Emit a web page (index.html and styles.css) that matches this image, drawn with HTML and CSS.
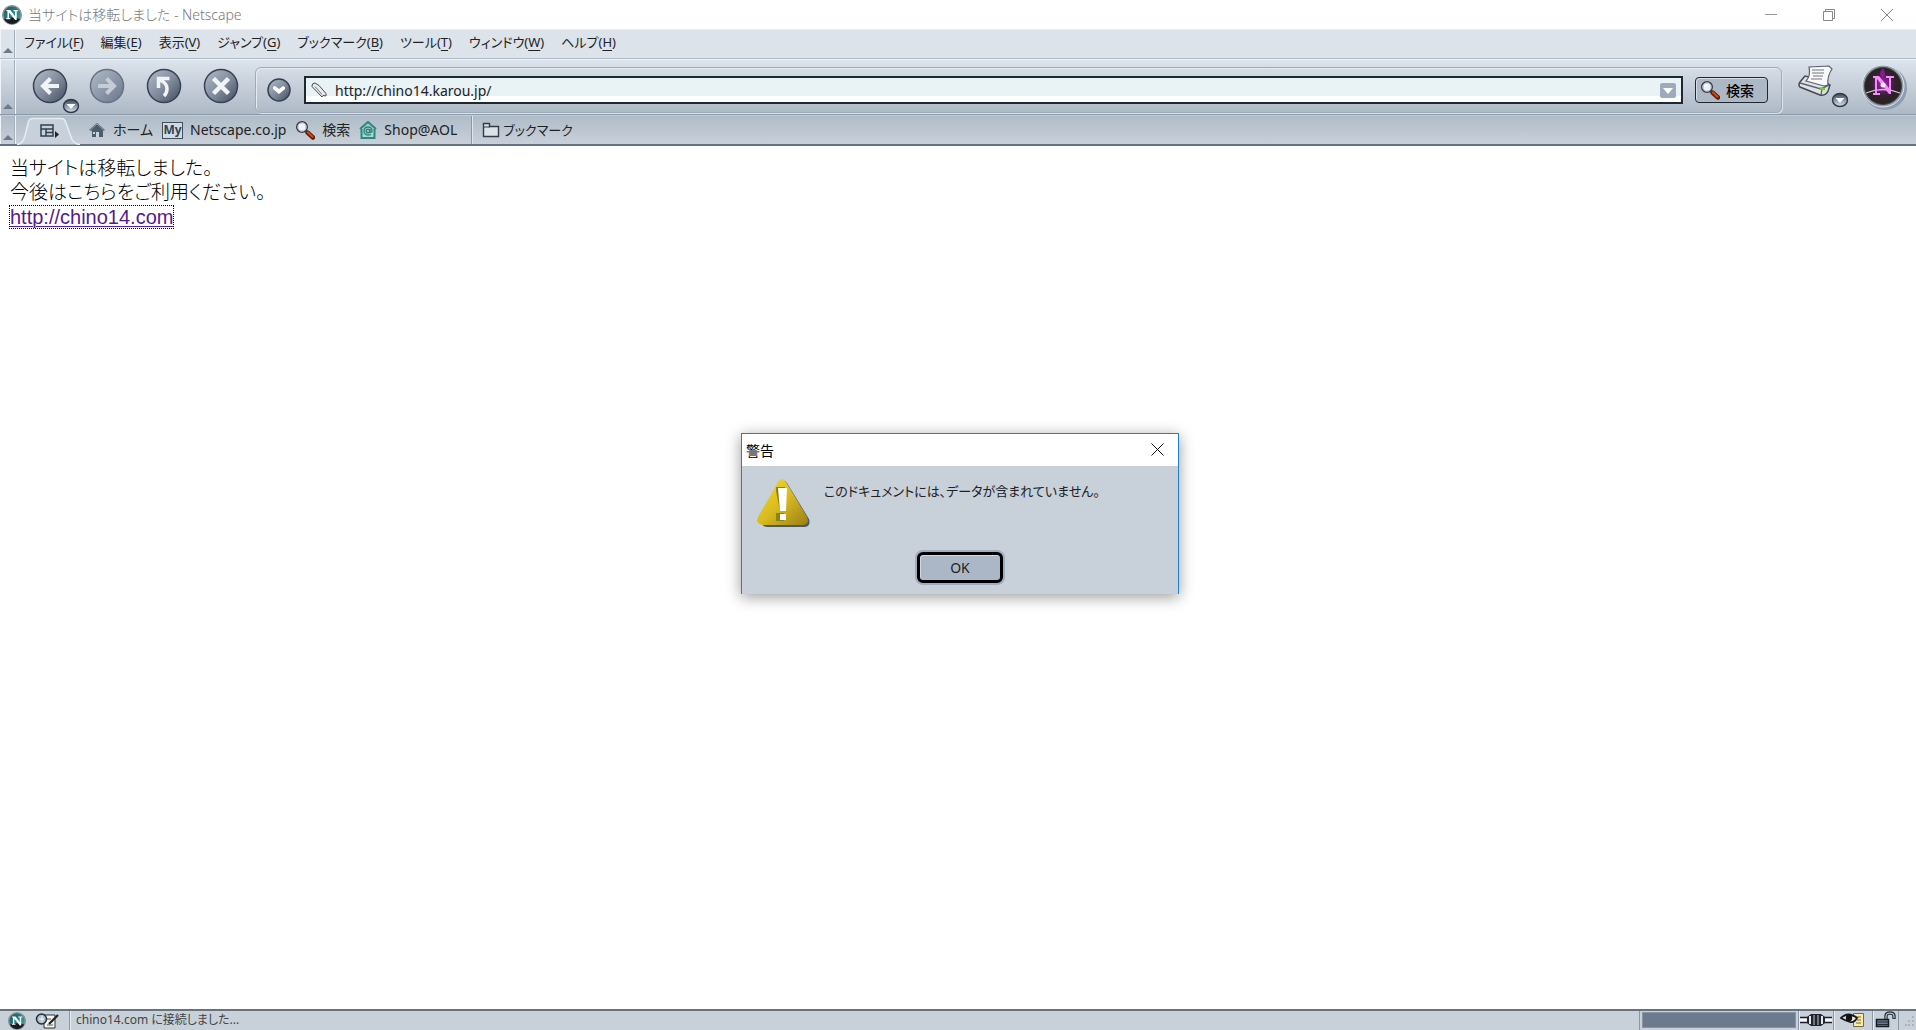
FILE: index.html
```html
<!DOCTYPE html>
<html lang="ja">
<head>
    <meta charset="UTF-8">
    <meta name="viewport" content="width=device-width, initial-scale=1.0">
    <title>当サイトは移転しました - Netscape</title>
    <link rel="stylesheet" href="styles.css">
</head>
<body>

    <!-- Shared gradients and small icons -->
    <svg class="defs" width="0" height="0" aria-hidden="true">
        <defs>
            <linearGradient id="ball" x1="0" y1="0" x2="1" y2="1">
                <stop offset="0" stop-color="#b4becb"/>
                <stop offset="0.55" stop-color="#7d899a"/>
                <stop offset="1" stop-color="#3f4b5d"/>
            </linearGradient>
            <linearGradient id="ballOff" x1="0" y1="0" x2="1" y2="1">
                <stop offset="0" stop-color="#b3bdca"/>
                <stop offset="1" stop-color="#68758a"/>
            </linearGradient>
            <linearGradient id="drop" x1="0" y1="0" x2="0" y2="1">
                <stop offset="0" stop-color="#3c4859"/>
                <stop offset="0.5" stop-color="#8794a6"/>
                <stop offset="1" stop-color="#dfe5ec"/>
            </linearGradient>
            <linearGradient id="teal" x1="0" y1="0" x2="1" y2="1">
                <stop offset="0" stop-color="#0d5558"/>
                <stop offset="1" stop-color="#3db0b0"/>
            </linearGradient>
            <linearGradient id="yellow" x1="0" y1="0" x2="1" y2="1">
                <stop offset="0" stop-color="#f5dc2c"/>
                <stop offset="0.5" stop-color="#d9bb20"/>
                <stop offset="1" stop-color="#9a7f14"/>
            </linearGradient>
            <radialGradient id="glow">
                <stop offset="0" stop-color="#d52be0"/>
                <stop offset="0.4" stop-color="#9a1aa8"/>
                <stop offset="1" stop-color="#2b2028" stop-opacity="0"/>
            </radialGradient>
            <symbol id="netscape" viewBox="0 0 20 20">
                <circle cx="10" cy="10" r="9.200" fill="url(#teal)" stroke="#8d8f90" stroke-width="1.600"/>
                <path d="M2 14Q10 11 18 14Q15 19 10 19T2 14z" fill="#151d22"/>
                <path d="M4.500 5h3.800l4.700 6V6.200h-1.500V5H16v1.200h-1.300V15h-1.500L7 7.500V13h1.300v1.200h-4V13h1.200V6.200h-1z" fill="#fff"/>
            </symbol>
            <symbol id="magnifier" viewBox="0 0 20 20">
                <path d="M10.500 10.500l2 2" stroke="#333" stroke-width="2"/>
                <path d="M12.500 12.500l5.500 5" stroke="#5a1c08" stroke-width="4.400" stroke-linecap="round"/>
                <path d="M13 12.500l4.500 4.200" stroke="#cf4a12" stroke-width="2.200" stroke-linecap="round"/>
                <circle cx="7" cy="7" r="5.300" fill="#eef1f8" stroke="#3a3d44" stroke-width="1.500"/>
                <circle cx="7" cy="7" r="4.100" fill="none" stroke="#a8aec0"/>
                <path d="M5 7a2.500 2.500 0 0 1 2.500-2.500" stroke="#fff" stroke-width="1.500" fill="none"/>
            </symbol>
            <symbol id="smallDrop" viewBox="0 0 18 16">
                <ellipse cx="9" cy="8" rx="7.500" ry="6.500" fill="url(#drop)" stroke="#2f3947" stroke-width="1.400"/>
                <path d="M4.500 6h9L9 11z" fill="#fff"/>
            </symbol>
        </defs>
    </svg>

    <!-- Window title -->
    <header class="title-bar">
        <svg class="title-icon" width="20" height="20"><use href="#netscape"/></svg>
        <h1>当サイトは移転しました - Netscape</h1>
        <div class="window-buttons">
            <button type="button" aria-label="最小化"><svg width="12" height="12"><path d="M0 5.500h12" stroke="#999"/></svg></button>
            <button type="button" aria-label="元に戻す"><svg width="12" height="12" fill="none" stroke="#888"><path d="M.5 2.500h9v9h-9zM2.500 2.500v-2h9v9h-2"/></svg></button>
            <button type="button" aria-label="閉じる"><svg width="12" height="12" stroke="#888"><path d="M0 0l12 12M12 0L0 12"/></svg></button>
        </div>
    </header>

    <!-- Menu -->
    <nav class="bar menu-bar">
        <div class="grip"></div>
        <div class="menu-items">
            <button type="button">ファイル(<u>F</u>)</button>
            <button type="button">編集(<u>E</u>)</button>
            <button type="button">表示(<u>V</u>)</button>
            <button type="button">ジャンプ(<u>G</u>)</button>
            <button type="button">ブックマーク(<u>B</u>)</button>
            <button type="button">ツール(<u>T</u>)</button>
            <button type="button">ウィンドウ(<u>W</u>)</button>
            <button type="button">ヘルプ(<u>H</u>)</button>
        </div>
    </nav>

    <!-- Navigation -->
    <div class="bar nav-bar">
        <div class="grip"></div>
        <div class="nav-buttons">
            <div class="nav-item">
                <button type="button" aria-label="戻る">
                    <svg width="36" height="36"><circle cx="18" cy="18" r="16.500" fill="url(#ball)" stroke="#37414f" stroke-width="1.500"/><path d="M27 18H12M18.500 10.500L11 18l7.500 7.500" fill="none" stroke="#f1f4f7" stroke-width="4"/></svg>
                </button>
                <button type="button" class="nav-drop" aria-label="戻る履歴"><svg width="18" height="16"><use href="#smallDrop"/></svg></button>
            </div>
            <button type="button" aria-label="進む">
                <svg width="36" height="36"><circle cx="18" cy="18" r="16.500" fill="url(#ballOff)" stroke="#66727f" stroke-width="1.500"/><path d="M9 18h15M17.500 10.500L25 18l-7.500 7.500" fill="none" stroke="#c5ccd6" stroke-width="4"/></svg>
            </button>
            <button type="button" aria-label="再読み込み">
                <svg width="36" height="36"><circle cx="18" cy="18" r="16.500" fill="url(#ball)" stroke="#37414f" stroke-width="1.500"/><path d="M12.500 20v-9.500h11M14 12q7 3 7 9 0 4-3 7" fill="none" stroke="#f1f4f7" stroke-width="3.500"/></svg>
            </button>
            <button type="button" aria-label="中止">
                <svg width="36" height="36"><circle cx="18" cy="18" r="16.500" fill="url(#ball)" stroke="#37414f" stroke-width="1.500"/><path d="M10.500 10.500l15 15M25.500 10.500l-15 15" stroke="#f1f4f7" stroke-width="4.500"/></svg>
            </button>
        </div>
        <form class="location">
            <button type="button" class="history" aria-label="履歴">
                <svg width="24" height="24"><circle cx="12" cy="12" r="11" fill="url(#ball)" stroke="#37414f" stroke-width="1.500"/><path d="M6 9l2-1 4 3 4-3 2 1v2l-6 5-6-5z" fill="#fff"/></svg>
            </button>
            <div class="url-box">
                <svg width="16" height="16"><path d="M1 4.500Q.5 1 4 1L8 3.500l7 8v2.500l-3-.5L11 15z" fill="#e9ecee" stroke="#454a50"/><path d="M4 4.500l7 8" stroke="#777"/></svg>
                <input type="text" aria-label="アドレス" value="http://chino14.karou.jp/">
                <button type="button" aria-label="アドレス一覧"><svg width="16" height="15"><rect width="16" height="15" rx="2" fill="#9eabbd"/><path d="M3 5h10l-5 6z" fill="#fff"/></svg></button>
            </div>
            <button type="submit" class="search-btn"><svg width="20" height="20"><use href="#magnifier"/></svg>検索</button>
        </form>
        <div class="nav-tools">
            <div class="nav-item">
                <button type="button" aria-label="印刷">
                    <svg width="36" height="34">
                        <path d="M2 17Q0 20 2 22L22 30q6 1 8-4l2-6-8-5-17-4z" fill="#dfe3e7" stroke="#434a52" stroke-width="1.500"/>
                        <path d="M2 18l21 6 8-4M24 24l-1 6" fill="none" stroke="#5d656f" stroke-width="1.400"/>
                        <path d="M8 16q5-5 3-14l20-1 3 3q-5 7-4 16l-4 1z" fill="#f8f9fa" stroke="#596068" stroke-width="1.200"/>
                        <path d="M14 5h12M14 8h12M15 11h10M13 14h11" stroke="#70777f" stroke-width="1.200"/>
                        <path d="M22 22l5 1v2.500l-5-1z" fill="#6fd02f"/>
                    </svg>
                </button>
                <button type="button" class="nav-drop print-drop" aria-label="印刷メニュー"><svg width="18" height="16"><use href="#smallDrop"/></svg></button>
            </div>
            <a class="logo" href="#" aria-label="Netscape">
                <svg width="46" height="46">
                    <circle cx="24" cy="24" r="22" fill="#8e9daf"/>
                    <circle cx="22" cy="22" r="21" fill="#8fa0ad" stroke="#e2e9ef"/>
                    <circle cx="22" cy="22" r="18.500" fill="#2b2226" stroke="#4b4048"/>
                    <circle cx="22" cy="20" r="15" fill="url(#glow)" opacity=".7"/>
                    <path d="M22 4q-6 6 0 10 4-4 0-10z" fill="#a41bb0" opacity=".7"/>
                    <path d="M5 29q17-7 34 0" fill="none" stroke="#c9bfd2" stroke-width="1.300"/>
                    <path d="M12 12h6l10 12V14h-3v-2h8v2h-3v16h-2L16 15v14h3v2h-7v-2h2V14h-2z" fill="#f58cfa"/>
                    <circle cx="22" cy="21" r="2.500" fill="#fff" opacity=".9"/>
                </svg>
            </a>
        </div>
    </div>

    <!-- Personal toolbar -->
    <nav class="bar personal-bar">
        <div class="grip"></div>
        <button type="button" class="sidebar-tab" aria-label="タブ">
            <svg class="tab-shape" width="66" height="30"><path d="M1 29.500Q7 29 9 21l3-13Q13 3.500 17 3.500h28Q49 3.500 50 8l5 14q2 7 9 7.500" fill="#c8d1db" stroke="#e6ebf0" stroke-width="1.500"/></svg>
            <svg class="tab-icon" width="20" height="16" fill="none" stroke="#2f4050" stroke-width="1.500"><path d="M1 2h12v11H1zM1 6h12M6 6v7M6 9.500h7"/><path d="M15 8l4 3.500-4 3.500z" fill="#222" stroke="none"/></svg>
        </button>
        <div class="links">
            <a href="#"><svg width="18" height="16"><path d="M1 8l8-7 8 7-2 1v6H4V9z" fill="#4b5d6d"/><path d="M2 8.500L9 2l7 6.500" fill="none" stroke="#8c9caa"/><path d="M8 15v-5h3v5M5 10h2v2H5z" fill="#c9d3dc"/></svg><span>ホーム</span></a>
            <a href="#"><span class="my-icon">My</span><span>Netscape.co.jp</span></a>
            <a href="#"><svg width="20" height="20"><use href="#magnifier"/></svg><span>検索</span></a>
            <a href="#"><svg width="18" height="18" fill="none" stroke="#238c7b"><path d="M1 8l8-7 8 7M2.500 8v9h13V8" stroke-width="2"/><circle cx="9" cy="10" r="1.800" stroke-width="1.500"/><path d="M11 8v3q1 1.500 2-1 0-4-4-4t-4 4 4 4q2 0 3-.5" stroke-width="1.300"/></svg><span>Shop@AOL</span></a>
        </div>
        <a class="bookmarks" href="#"><svg width="18" height="16"><path d="M1.500 14.500v-13h6v3h9v10z" fill="#dde2e8" stroke="#333b45" stroke-width="1.400"/><path d="M2 5h6" stroke="#333b45"/></svg><span>ブックマーク</span></a>
    </nav>

    <!-- Page -->
    <main class="page">
        <p>当サイトは移転しました。</p>
        <p>今後はこちらをご利用ください。</p>
        <p class="new-url"><a href="http://chino14.com">http://chino14.com</a></p>
    </main>

    <!-- Status -->
    <footer class="status-bar">
        <div class="status-apps">
            <svg width="18" height="18"><use href="#netscape"/></svg>
            <svg width="24" height="18"><path d="M9 3h11v13H9z" fill="#f4f4f2" stroke="#333"/><path d="M11 7h5M12 13h6" stroke="#555"/><circle cx="6.500" cy="7" r="5" fill="#aebfd0" stroke="#252d36" stroke-width="1.500"/><path d="M4 7h5M7 4v6" stroke="#f4f7f9"/><path d="M14 12l9-9" stroke="#222" stroke-width="2.200"/></svg>
        </div>
        <div class="status-text">chino14.com に接続しました...</div>
        <div class="status-progress"><div class="progress-fill"></div></div>
        <div class="status-cell plug"><svg width="34" height="18"><path d="M1 9h32" stroke="#f5f6f8" stroke-width="4"/><path d="M1 6.500h9M1 11.500h9M24 6.500h9M24 11.500h9" stroke="#1b1f25" stroke-width="1.400"/><path d="M8 6l4-3h10l4 3v6l-4 3H12l-4-3z" fill="#20252c"/><path d="M11 5v8M23 5v8" stroke="#e4e8ec" stroke-width="2"/><path d="M15 4v10M19 4v10" stroke="#8d98a5" stroke-width="1.400"/></svg></div>
        <div class="status-cell eye"><svg width="26" height="18"><path d="M13.500 2.500h10v13h-10z" fill="#fbe9a5" stroke="#756b43"/><path d="M16 6h5M17 9h4M16 12h5" stroke="#6c6343"/><path d="M1 7Q8 0 17 7q-3 5-7 4T1 7z" fill="#e8eaed" stroke="#17191c" stroke-width="1.800"/><circle cx="9" cy="7" r="3.200" fill="#111"/></svg></div>
        <div class="status-cell lock"><svg width="22" height="18"><path d="M11 9V5q0-3 4-3t4 3v3" fill="none" stroke="#303841" stroke-width="3.500"/><path d="M11 8V5q0-3 4-3t4 3v2" fill="none" stroke="#cbd2da" stroke-width="1"/><path d="M1.500 8.500h12v7h-12z" fill="#6b7c90" stroke="#171d24" stroke-width="1.500"/><path d="M2 11h11M2 13.500h11" stroke="#26303c"/></svg></div>
        <div class="status-end"><svg width="10" height="14" fill="#b0b3b4"><path d="M7 0h2v2H7zM3 4h2v2H3zM7 4h2v2H7zM0 8h2v2H0zM3 8h2v2H3zM7 8h2v2H7z"/></svg></div>
    </footer>

    <!-- Alert -->
    <div class="alert" role="alertdialog" aria-labelledby="alertTitle">
        <div class="alert-title">
            <h2 id="alertTitle">警告</h2>
            <button type="button" aria-label="閉じる"><svg width="13" height="13" stroke="#111"><path d="M.5.5l12 12M12.500.5l-12 12"/></svg></button>
        </div>
        <div class="alert-body">
            <div class="alert-message">
                <svg width="56" height="50">
                    <path d="M25 5q3-5 6 0l22 36q2 7-4 8H11q-7-1-4-8z" fill="#4a5a69"/>
                    <path d="M22 4q4-6 8 0l21 35q3 7-4 8H7q-8-1-5-8z" fill="url(#yellow)"/>
                    <path d="M20 9h9v24h-5l-4-20zM20 35h8v8h-8z" fill="#94800e"/>
                    <path d="M22 10h9l-1 23h-6zM24 36h6v6h-6z" fill="#fff"/>
                </svg>
                <p>このドキュメントには、データが含まれていません。</p>
            </div>
            <button type="button" class="ok-btn">OK</button>
        </div>
    </div>

</body>
</html>
```
FILE: styles.css
```css
* {
    box-sizing: border-box;
}

body {
    margin: 0;
    height: 100vh;
    display: flex;
    flex-direction: column;
    background-color: #fff;
    color: #222;
    font-family: "Noto Sans", "Noto Sans CJK JP", sans-serif;
    font-size: 13px;
    font-feature-settings: "palt";
}

h1, h2, p {
    margin: 0;
    font-weight: normal;
}

svg {
    display: block;
    flex-shrink: 0;
}

.defs {
    position: absolute;
}

button {
    font: inherit;
    font-feature-settings: inherit;
    color: inherit;
    background: none;
    border: none;
    padding: 0;
}

/* Window title */
.title-bar {
    height: 29px;
    display: flex;
    align-items: center;
    gap: 6px;
    padding-left: 2px;
    color: #777;
}

.title-bar h1 {
    font-size: 14px;
    line-height: 28px;
    font-weight: 300;
}

.window-buttons {
    margin-left: auto;
    display: flex;
}

.window-buttons button {
    width: 58px;
    height: 28px;
    display: flex;
    align-items: center;
    justify-content: center;
}

/* Bars */
.bar {
    display: flex;
    flex-shrink: 0;
}

.grip {
    width: 16px;
    flex-shrink: 0;
    display: flex;
    align-items: flex-end;
    justify-content: center;
    padding-bottom: 5px;
    border-left: 1px solid #f0f4f8;
    border-right: 1px solid #f0f4f8;
    box-shadow: inset -1px 0 #a3b0bf;
}

.grip::after {
    content: "";
    border: 5px solid transparent;
    border-top: none;
    border-bottom-color: #6d7a8b;
}

.menu-bar {
    height: 30px;
    background-color: #dce3eb;
    border-top: 1px solid #e9eff5;
    border-bottom: 1px solid #b0bcc8;
}

.menu-items {
    display: flex;
    align-items: center;
    gap: 1px;
    padding-bottom: 4px;
}

.menu-items button {
    padding: 0 8px;
    line-height: 24px;
    white-space: nowrap;
}

.menu-items u {
    text-underline-offset: 3px;
    text-decoration-thickness: 1px;
}

/* Navigation */
.nav-bar {
    height: 56px;
    background: linear-gradient(#dce3ec, #adb9c6);
    border-top: 1px solid #eef2f6;
    border-bottom: 1px solid #8c99a7;
}

.nav-buttons {
    display: flex;
    gap: 21px;
    padding: 8px 16px 0;
}

.nav-buttons > button,
.nav-item > button:first-child {
    height: 36px;
}

.nav-item {
    position: relative;
}

.nav-drop {
    position: absolute;
    left: 30px;
    top: 30px;
}

.location {
    flex: 1;
    display: flex;
    align-items: center;
    margin: 7px 0 1px;
    padding: 0 13px 0 11px;
    border: 1px solid #9cabb9;
    border-radius: 6px;
    box-shadow: inset 1px 1px #e5ebf1, 1px 1px #dce3ea;
}

.url-box {
    flex: 1;
    display: flex;
    align-items: center;
    height: 28px;
    margin: 0 12px 0 13px;
    padding: 0 5px;
    border: 2px solid #1d2831;
    background: linear-gradient(#e9f3f6 75%, #fff 75%);
}

.url-box input {
    flex: 1;
    min-width: 0;
    border: none;
    outline: none;
    background: none;
    padding: 0 0 0 8px;
    font: inherit;
    font-size: 14px;
    color: #222;
}

.search-btn {
    display: flex;
    align-items: center;
    gap: 6px;
    width: 73px;
    height: 26px;
    padding-left: 4px;
    border: 1px solid #20262d;
    border-radius: 4px;
    background-color: #adb8c7;
    box-shadow: inset 1px 1px #d5dde6;
    font-size: 14px;
    font-weight: 500;
    color: #000;
}

.nav-tools {
    display: flex;
    padding: 4px 9px 0 16px;
    gap: 27px;
}

.print-drop {
    left: 33px;
    top: 28px;
}

/* Personal toolbar */
.personal-bar {
    height: 31px;
    background: linear-gradient(#afbcc8, #c8d0da);
    border-top: 1px solid #c4ced8;
    border-bottom: 2px solid #667383;
}

.personal-bar .grip {
    padding-bottom: 4px;
}

.sidebar-tab {
    position: relative;
    width: 66px;
}

.tab-shape {
    margin-top: -1px;
}

.tab-icon {
    position: absolute;
    left: 24px;
    top: 7px;
}

.personal-bar a {
    display: flex;
    align-items: center;
    gap: 7px;
    color: #222;
    text-decoration: none;
    line-height: 26px;
    white-space: nowrap;
}

.links {
    display: flex;
    gap: 9px;
    padding: 0 14px 0 6px;
    border-right: 1px solid #8896a5;
    box-shadow: 1px 0 #e0e6ec;
    font-size: 14px;
}

.my-icon {
    width: 21px;
    height: 17px;
    border: 1px solid #3d5060;
    background-color: #d2dae2;
    color: #33424f;
    font-size: 12px;
    font-weight: bold;
    line-height: 14px;
    text-align: center;
}

.personal-bar .bookmarks {
    padding-left: 10px;
    gap: 3px;
}

/* Page */
.page {
    flex: 1;
    padding: 11px 10px;
    color: #000;
    font-family: "Liberation Sans", "Noto Sans CJK JP", sans-serif;
    font-size: 19px;
    font-weight: 300;
    line-height: 24px;
}

.page p {
    font-weight: inherit;
}

.page .new-url {
    font-size: 20px;
}

.page a {
    color: #551a8b;
    outline: 1px dotted #000;
    text-underline-offset: 2px;
    text-decoration-thickness: 1px;
}

/* Status */
.status-bar {
    height: 21px;
    flex-shrink: 0;
    display: flex;
    background-color: #c8d0da;
    border-top: 2px solid #667383;
    color: #444;
}

.status-apps {
    display: flex;
    gap: 9px;
    width: 70px;
    padding: 1px 0 0 8px;
    border-right: 1px solid #8896a5;
}

.status-text {
    flex: 1;
    padding-left: 5px;
    border-left: 1px solid #e8edf2;
    font-size: 12px;
    line-height: 18px;
}

.status-progress {
    width: 160px;
    padding: 1px 2px 2px;
    border-left: 1px solid #8896a5;
    border-right: 1px solid #8896a5;
}

.progress-fill {
    height: 16px;
    background-color: #6b7a8d;
    border: 1px solid #8795a5;
}

.status-cell {
    display: flex;
    justify-content: center;
    border-right: 1px solid #8896a5;
    box-shadow: inset 1px 0 #e8edf2;
}

.plug {
    width: 35px;
}

.eye {
    width: 39px;
}

.lock {
    width: 26px;
}

.status-end {
    width: 17px;
    padding: 5px 0 0 6px;
}

/* Alert */
.alert {
    position: absolute;
    left: calc(50% - 217px);
    top: calc(50% - 82px);
    width: 438px;
    border: 1px solid #1a82d0;
    border-bottom: none;
    background-color: #c8d0da;
    box-shadow: 0 3px 14px rgba(0, 0, 0, 0.4);
}

.alert-title {
    display: flex;
    align-items: center;
    justify-content: space-between;
    height: 32px;
    padding: 0 14px 1px 4px;
    background-color: #fff;
    color: #000;
}

.alert-title h2 {
    font-size: 14px;
}

.alert-body {
    display: flex;
    flex-direction: column;
    align-items: center;
    gap: 24px;
    padding: 12px 14px 11px;
}

.alert-message {
    display: flex;
    align-self: stretch;
    gap: 12px;
}

.alert-message p {
    line-height: 26px;
}

.ok-btn {
    width: 86px;
    height: 31px;
    border: 3px solid #000;
    border-radius: 6px;
    background-color: #abb7c6;
    box-shadow: 0 0 0 2px #a0aebb, inset 1px 1px #d0d8e1;
    font-size: 14px;
}
```
